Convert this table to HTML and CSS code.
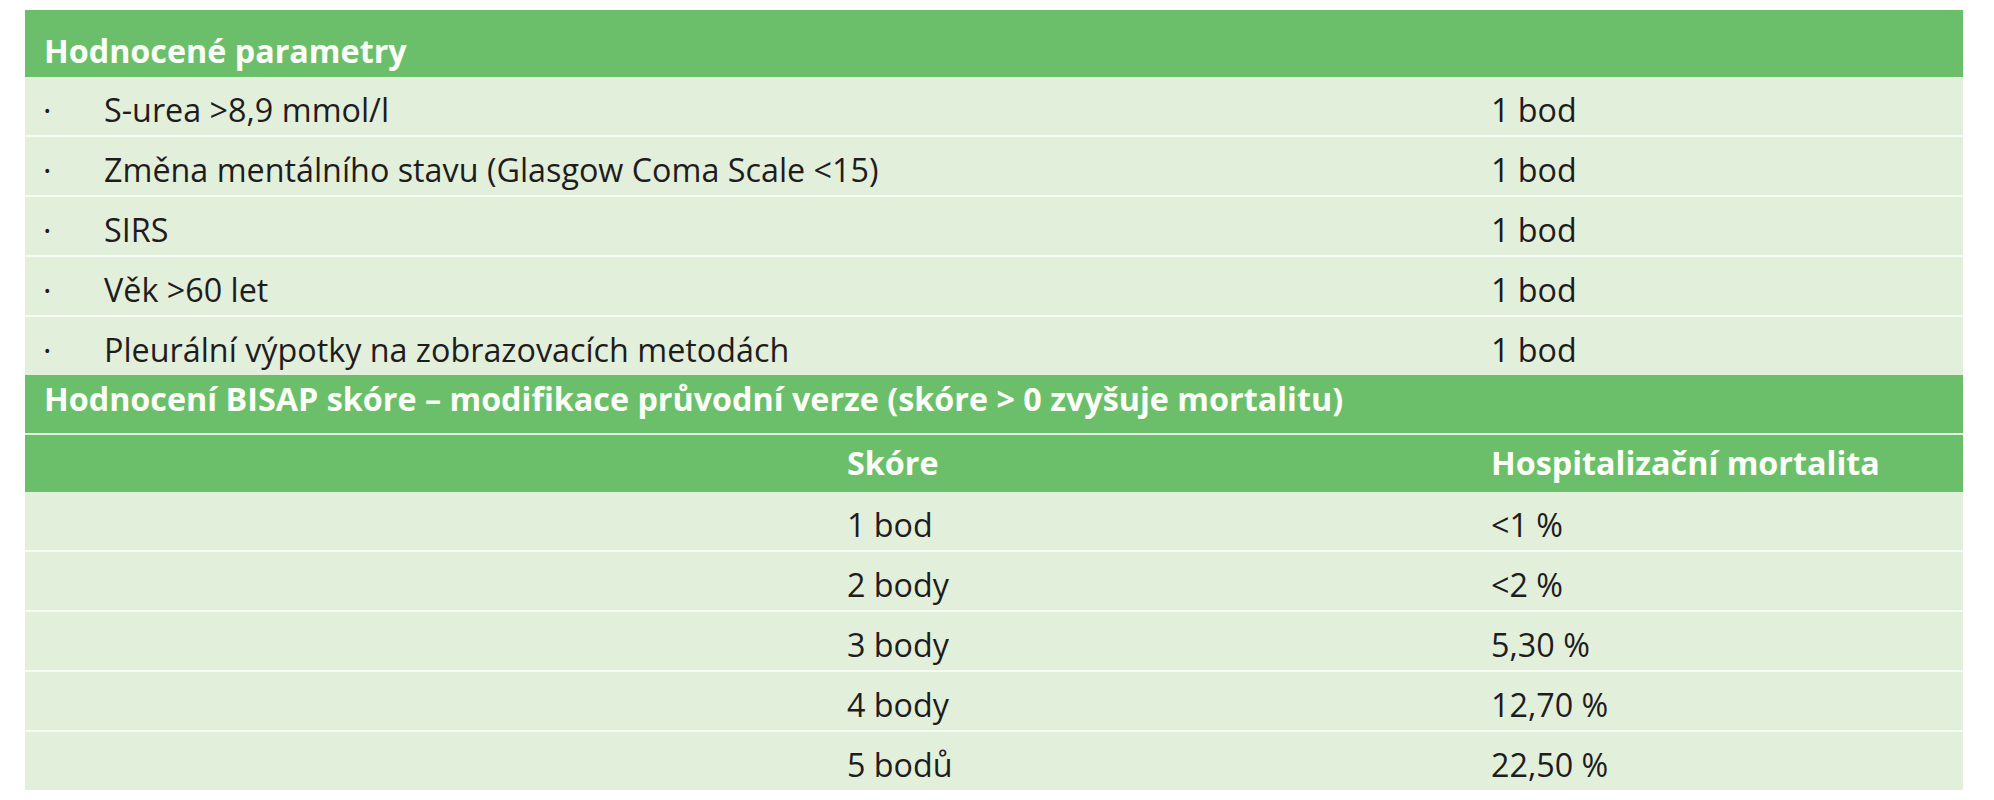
FILE: index.html
```html
<!DOCTYPE html>
<html lang="cs">
<head>
<meta charset="utf-8">
<title>BISAP skóre</title>
<link rel="stylesheet" href="styles.css">
</head>
<body>
<div class="table">
  <div class="row head head-first"><div class="cell">Hodnocené parametry</div></div>

  <div class="row param"><div class="bullet">·</div><div class="cell">S-urea &gt;8,9 mmol/l</div><div class="cell">1 bod</div></div>
  <div class="row param"><div class="bullet">·</div><div class="cell">Změna mentálního stavu (Glasgow Coma Scale &lt;15)</div><div class="cell">1 bod</div></div>
  <div class="row param"><div class="bullet">·</div><div class="cell">SIRS</div><div class="cell">1 bod</div></div>
  <div class="row param"><div class="bullet">·</div><div class="cell">Věk &gt;60 let</div><div class="cell">1 bod</div></div>
  <div class="row param last"><div class="bullet">·</div><div class="cell">Pleurální výpotky na zobrazovacích metodách</div><div class="cell">1 bod</div></div>

  <div class="row head head-second"><div class="cell">Hodnocení BISAP skóre – modifikace průvodní verze (skóre &gt; 0 zvyšuje mortalitu)</div></div>

  <div class="row score head-sub"><div class="cell"></div><div class="cell">Skóre</div><div class="cell">Hospitalizační mortalita</div></div>

  <div class="row score"><div class="cell"></div><div class="cell">1 bod</div><div class="cell">&lt;1 %</div></div>
  <div class="row score"><div class="cell"></div><div class="cell">2 body</div><div class="cell">&lt;2 %</div></div>
  <div class="row score"><div class="cell"></div><div class="cell">3 body</div><div class="cell">5,30 %</div></div>
  <div class="row score"><div class="cell"></div><div class="cell">4 body</div><div class="cell">12,70 %</div></div>
  <div class="row score last"><div class="cell"></div><div class="cell">5 bodů</div><div class="cell">22,50 %</div></div>
</div>
</body>
</html>
```
FILE: styles.css
```css
html, body {
  margin: 0;
  padding: 0;
  background: #ffffff;
}

body {
  padding: 10px 31px 0 25px;
  font-family: "Open Sans", "Noto Sans", sans-serif;
  font-size: 32.3px;
  line-height: 40px;
  color: #1f1c1d;
}

.table {
  display: flex;
  flex-direction: column;
  width: 1938px;
}

.row {
  box-sizing: border-box;
  height: 60px;
  padding-top: 12px;
  background: #e2efdb;
  border-bottom: 2px solid #f6fbf3;
  white-space: nowrap;
}

.row.last {
  height: 58px;
  border-bottom: 0;
}

.param {
  display: grid;
  grid-template-columns: 79px 1387px 1fr;
}

.score {
  display: grid;
  grid-template-columns: 822px 644px 1fr;
}

.bullet {
  padding-left: 18px;
}

.head {
  background: #6cbf6a;
  color: #fbfff8;
  font-weight: 700;
  padding-left: 19px;
}

.head-first {
  height: 67px;
  padding-top: 20px;
  border-bottom: 0;
}

.head-second {
  height: 60px;
  padding-top: 3px;
  border-bottom: 2px solid #e4f3df;
}

.head-sub {
  background: #6cbf6a;
  color: #fbfff8;
  font-weight: 700;
  height: 57px;
  padding-top: 7px;
  border-bottom: 0;
}
```
